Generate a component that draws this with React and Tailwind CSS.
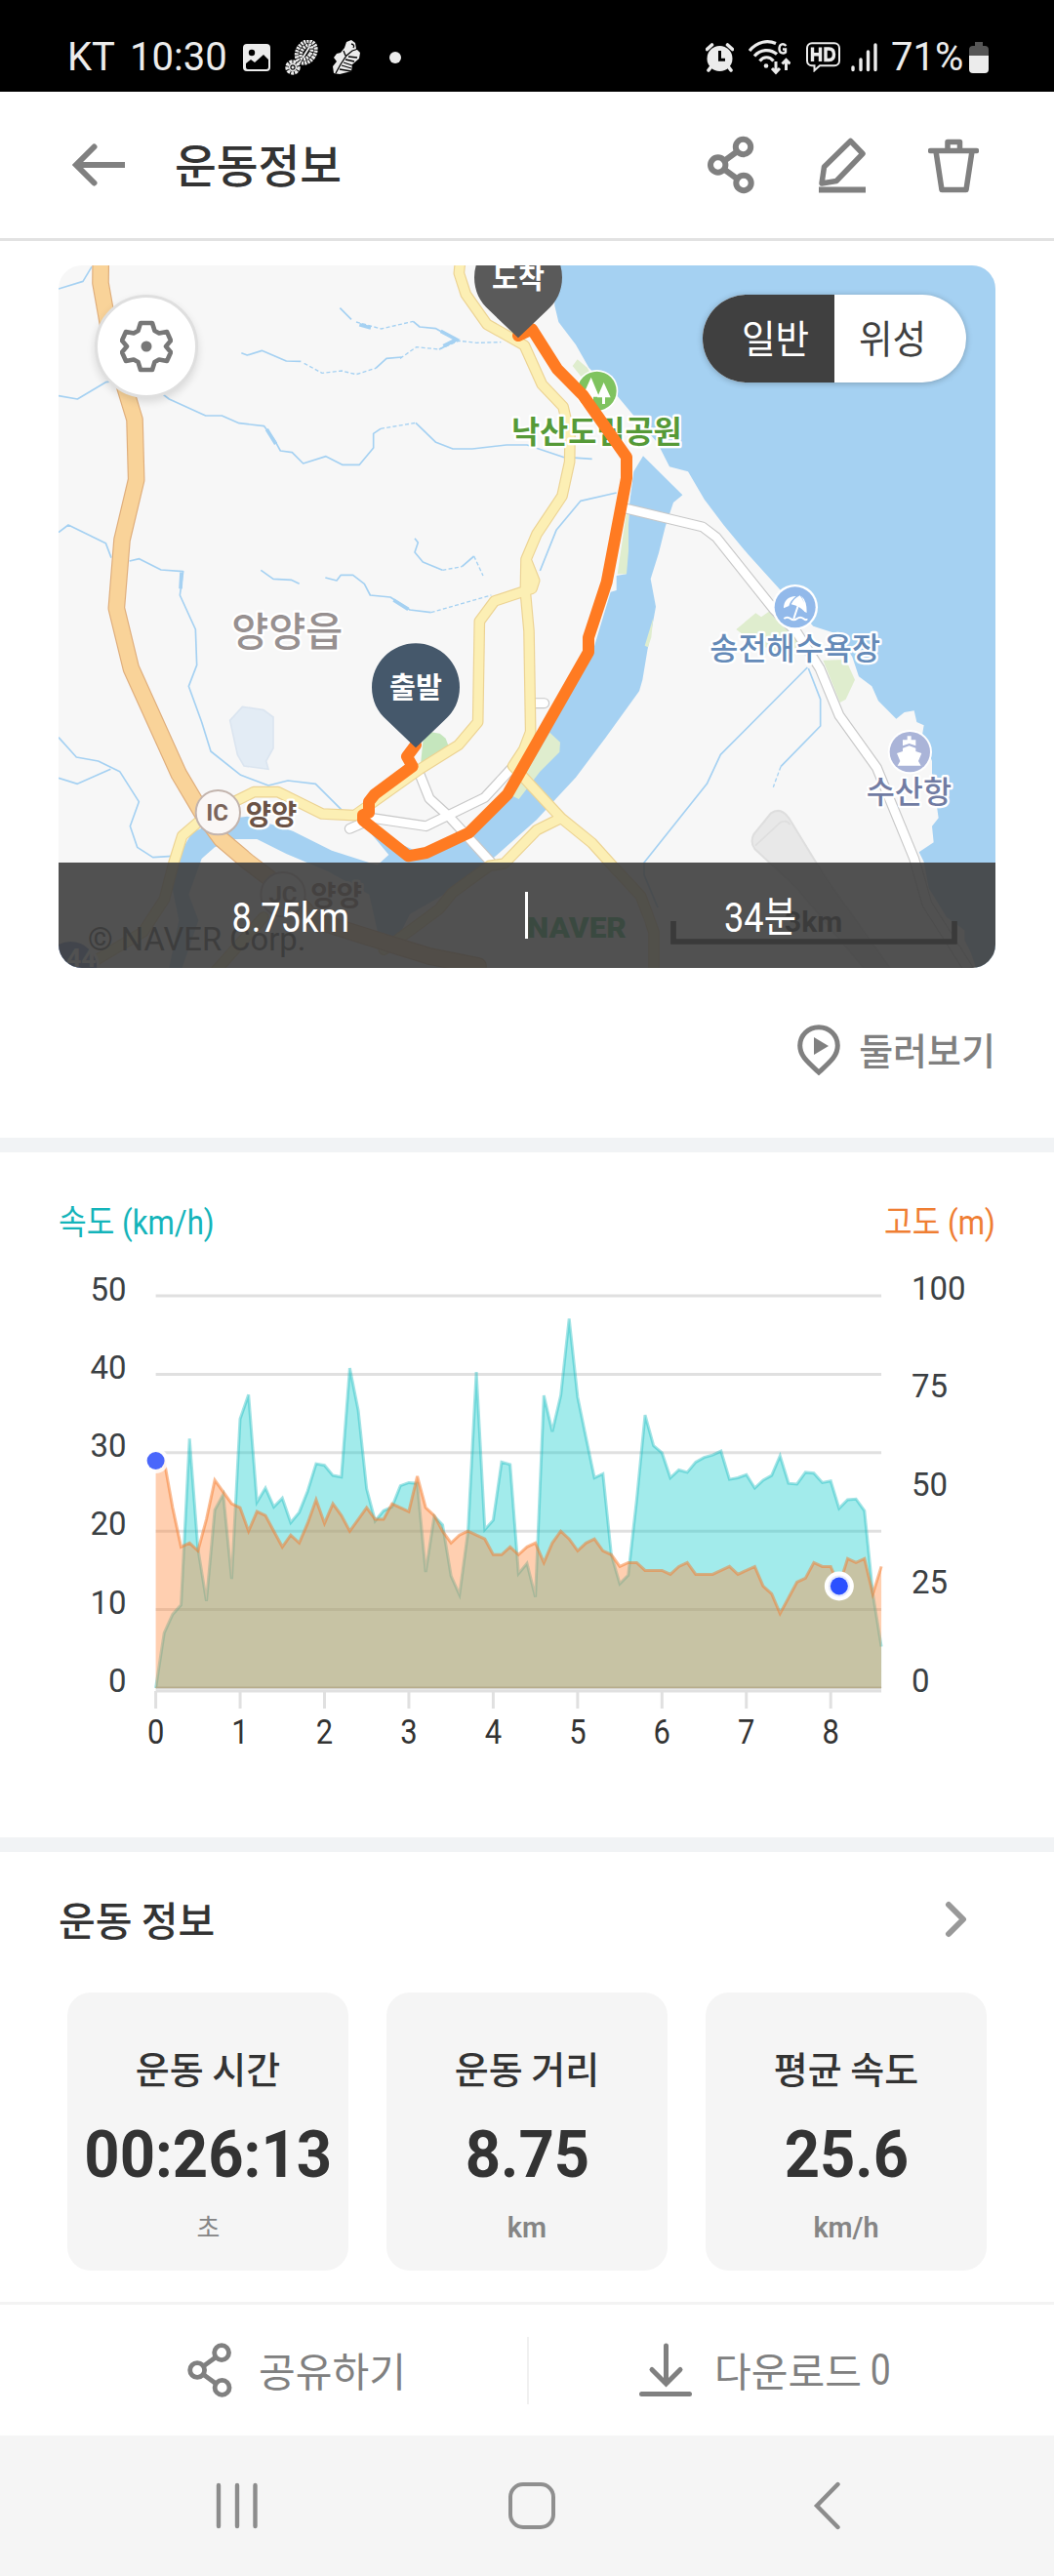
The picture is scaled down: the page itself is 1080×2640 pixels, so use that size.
import React from 'react';

const SPEED = [
  0, 7, 9.4, 10.6, 31.8, 17.8, 11.1, 22.7, 24.7, 13.9,
  34.3, 37.4, 23.7, 25.5, 23.1, 24.2, 21.1, 22.4, 25.1, 28.6,
  28.4, 27.1, 26.9, 40.8, 35.4, 25.4, 21.3, 22.6, 23.1, 25.8,
  26.2, 26.1, 14.8, 21.9, 20.8, 14.3, 11.9, 19.9, 40.3, 20.2,
  21.4, 28.8, 28.5, 14.6, 15.9, 11.6, 37.3, 32.7, 37.3, 47.1,
  37.1, 31.9, 26.8, 27.3, 17, 13.3, 14.4, 24, 34.8, 30.9,
  30, 26.8, 27.8, 27.5, 28.8, 29.4, 29.7, 30.2, 26.6, 26.8,
  27.2, 25.5, 26.5, 27.1, 29.6, 26.1, 26, 27.5, 27.4, 26.2,
  26.4, 22.9, 24, 24.1, 22.6, 12, 5.3,
];

const ELEVATION = [
  58, 58, 46, 36, 37, 35, 43, 53, 50, 47,
  46, 40, 45, 44, 40, 36, 39, 37, 42, 48,
  42, 47, 44, 40, 43, 46, 43, 43, 47, 46,
  45, 54, 46, 44, 40, 37, 39, 40, 39, 38,
  34, 34, 36, 34, 36, 37, 32, 37, 40, 38,
  35, 37, 38, 35, 34, 31, 32, 32, 30, 30,
  30, 29, 31, 32, 29, 29, 29, 30, 31, 29,
  30, 31, 26, 24, 19, 23, 27, 28, 32, 31,
  31, 26, 33, 32, 33, 24, 31,
];

const STATS = [
  { label: '운동 시간', value: '00:26:13', unit: '초' },
  { label: '운동 거리', value: '8.75', unit: 'km' },
  { label: '평균 속도', value: '25.6', unit: 'km/h' },
];

function StatusBar() {
  return (
    <div className="flex h-[94px] items-center bg-black pt-[23px] pr-[67px] pl-[69px] font-['Roboto',sans-serif] text-[40px] leading-none text-[#ececec]">
      <span className="w-[50px]">KT</span>
      <span className="ml-[14px] w-[102px]">10:30</span>
      <svg className="ml-[14px] h-7 w-7" viewBox="0 0 28 28">
        <rect width="28" height="28" rx="4" fill="#ececec" />
        <circle cx="9" cy="9" r="3.2" fill="#000" />
        <path d="M3 20l5-4 4 3 9-8 5 5v8a2 2 0 0 1-2 2H5a2 2 0 0 1-2-2z" fill="#000" />
      </svg>
      <svg className="ml-[15px] h-9 w-[34px]" viewBox="0 0 34 36" fill="none" stroke="#ececec">
        <g transform="rotate(32 22 12)">
          <ellipse cx="22" cy="12.500" rx="9" ry="12" strokeWidth="4" strokeDasharray="2.200 .9" />
          <ellipse cx="22" cy="12.500" rx="4.500" ry="8" strokeWidth="3.600" strokeDasharray="2.200 .9" />
          <path d="M22 6v13" strokeWidth="2" />
        </g>
        <circle cx="8" cy="28" r="6" strokeWidth="3.400" strokeDasharray="3 1" />
        <circle cx="8" cy="28" r="3.400" strokeWidth="1.500" />
        <circle cx="8" cy="28" r="1.500" fill="#ececec" stroke="none" />
      </svg>
      <svg className="ml-[15px] h-9 w-7" viewBox="0 0 28 36">
        <path d="M14 2l5-2 4 3 1 6 4 4-1 6-7 6-1 7-12 3-6-1-1-7 4-5-3-4 3-4 4-1 4-5z" fill="#ececec" />
        <path d="M3 34l5-9 6-9 6-5 6-2M16 17l9 1M13 20l9 2M11 23l9 3M9 26l10 3M7 30l12 2M19 4q4 1 2 4M11 11l2 5" stroke="#000" strokeWidth="1.300" fill="none" />
      </svg>
      <span className="ml-[30px] h-3 w-3 rounded-full bg-[#ececec]" />
      <svg className="ml-auto h-[30px] w-[29px]" viewBox="0 0 29 30">
        <path d="M1.500 6.500l5-4.500M27.500 6.500l-5-4.500M3 28l3-4M26 28l-3-4" stroke="#ececec" strokeWidth="3.600" strokeLinecap="round" />
        <circle cx="14.500" cy="16" r="13" fill="#ececec" />
        <path d="M14.500 8v9.300h5.500" stroke="#000" strokeWidth="3" fill="none" />
      </svg>
      <svg className="ml-[15px] h-9 w-[43px]" viewBox="0 0 43 36" fill="none" stroke="#ececec" strokeWidth="3.200">
        <path d="M1 11C9 1 20 0 28 3.500M6 16.500c6-7 16-8 23-2M11.500 21.500c4-5 10-5 14 0" />
        <circle cx="18" cy="26.500" r="2.300" fill="#ececec" stroke="none" />
        <path d="M38.500 6C35 2.500 31.500 4.500 31.500 9s4 5.500 6.500 3.500V9.500h-3" strokeWidth="2.400" />
        <path d="M28 22v11M24 29l4 4.200 4-4.200M38.500 31V20.500M34.500 24.500l4-4.200 4 4.200" strokeWidth="3" />
      </svg>
      <svg className="ml-[16px] h-[31px] w-[35px]" viewBox="0 0 35 31" fill="none" stroke="#ececec">
        <path d="M6 1.200h23a5 5 0 0 1 5 5v13a5 5 0 0 1-5 5H14l-5.500 5V24.200H6a5 5 0 0 1-5-5v-13a5 5 0 0 1 5-5z" strokeWidth="2" />
        <path d="M6.500 5.500v14.500M14.500 5.500v14.500M6.500 12.700h8M20 7v11.500h3.500c3.500 0 5-2 5-5.700S27 7 23.500 7z" strokeWidth="3.400" />
      </svg>
      <svg className="ml-[11px] h-[31px] w-[27px]" viewBox="0 0 27 31" stroke="#ececec" strokeWidth="3.400" strokeLinecap="round">
        <path d="M2 26v2.500M10 18v10.500M17.500 10v18.500M25 3v25.500" />
      </svg>
      <span className="ml-[14px] w-[74px]">71%</span>
      <svg className="ml-[6px] h-8 w-5" viewBox="0 0 20 32">
        <path d="M6 0h8v4h2a4 4 0 0 1 4 4v7H0V8a4 4 0 0 1 4-4h2z" fill="#555" />
        <path d="M0 14h20v14a4 4 0 0 1-4 4H4a4 4 0 0 1-4-4z" fill="#ececec" />
      </svg>
    </div>
  );
}

function ShareIcon({ className, strokeWidth = 6 }) {
  return (
    <svg className={className} viewBox="0 0 48 60" fill="none" stroke="#808080" strokeWidth={strokeWidth}>
      <path d="M30 16.500L17 26M17 34.500l13 9.500" />
      <circle cx="36.500" cy="11.500" r="7.700" />
      <circle cx="10.700" cy="30" r="7.700" />
      <circle cx="37" cy="48.500" r="7.700" />
    </svg>
  );
}

function Header() {
  return (
    <header className="flex h-[153px] items-center border-b-[3px] border-[#e2e2e2] bg-white pr-[77px] pl-[74px]">
      <svg className="h-[44px] w-[54px]" viewBox="0 0 54 44" fill="none" stroke="#808080" strokeWidth="6">
        <path d="M4 22h50" />
        <path d="M22.500 3.500L4 22l18.500 18.500" strokeLinecap="round" />
      </svg>
      <h1 className="mb-[4px] ml-[51px] text-[46.500px] leading-none font-medium text-[#333]">운동정보</h1>
      <ShareIcon className="ml-auto h-[60px] w-[48px]" />
      <svg className="ml-[66px] h-[60px] w-[48px]" viewBox="0 0 48 60" fill="none" stroke="#808080" strokeWidth="5.500">
        <path d="M32.500 5.500L45 18.500 18 46.500 3 49l2.500-17z" strokeLinejoin="round" />
        <path d="M0 55.500h48" strokeWidth="6" />
      </svg>
      <svg className="ml-[64px] h-[60px] w-[52px]" viewBox="0 0 52 60" fill="none" stroke="#808080" strokeWidth="5.500">
        <path d="M2.500 15.500h47" strokeLinecap="round" />
        <path d="M20 15V6.500h12.500V15M8 16l6 39.500h25L45 16" strokeLinejoin="round" />
      </svg>
    </header>
  );
}

// two strokes per road: casing, then surface
function Road({ d, width, fill, edge }) {
  return (
    <g fill="none" strokeLinejoin="round" strokeLinecap="round">
      <path d={d} stroke={edge} strokeWidth={width + 7} />
      <path d={d} stroke={fill} strokeWidth={width} />
    </g>
  );
}

function Pin({ x, y, color, label }) {
  return (
    <g transform={`translate(${x} ${y})`}>
      <path d="M0 0L-88 -84C-118 -110 -135 -145 -135 -186A135 135 0 0 1 135 -186C135 -145 118 -110 88 -84Z" fill={color} />
      <text y="-155" textAnchor="middle" fontSize="88" fontWeight="700" fill="#fff">{label}</text>
    </g>
  );
}

function MapLabel({ x, y, size, color, weight = 500, children }) {
  return (
    <text x={x} y={y} fontSize={size} textAnchor="middle" fontWeight={weight} fill={color} stroke="#fff" strokeWidth="14" strokeLinejoin="round" paintOrder="stroke">{children}</text>
  );
}

const YELLOW_ROADS = 'M1297 0L1291 60 1312 125 1377 217 1492 282 1546 402 1611 470 1632 560 1631 640 1608 745 1530 862 1497 940 1495 1040 1506 1160 1511 1470 1490 1525 1457 1575 1605 1735 1700 1812 1772 1892 1850 1975 1890 2085 1890 2220M1497 940L1523 1005 1515 1030 1400 1068 1354 1130 1349 1440 1290 1510 1170 1585 970 1727 870 1722 735 1655 660 1655 590 1690M490 1747L440 1790 415 1870 385 1985 320 2085 170 2175M1605 1735L1530 1772 1430 1875 1385 1882 1270 1965 1230 2015 1060 2140M690 2040L530 2220';

const WHITE_ROADS = 'M1790 780L2040 840 2082 872 2260 1095 2330 1165 2400 1275 2460 1420 2575 1580 2690 1860 2730 2000 2870 2220M1170 1600L1200 1675 1260 1730 1390 1872M1030 1736L1190 1760 1370 1672 1450 1585M955 1768L1000 1748M1520 1382L1553 1382';

const HIGHWAY = 'M190 0L189 90 213 225 262 405 294 510 299 695 255 880 238 1090 283 1275 430 1600 500 1718 560 1800 640 1868 760 1960 850 2050 1040 2110 1200 2160 1350 2190';

const STREAMS = 'M60 108L135 85 162 40M60 437L118 447 205 395 228 392M375 428L400 447 512 498 562 498 615 521 692 530 725 575 742 606 778 611 812 645 882 623 932 649 985 649 1028 597 1028 553 1050 538M1158 520L1220 580 1272 600 1332 600 1437 588 1500 588 1610 625 1700 631M60 857L90 834 205 890 222 935M278 945L308 938 375 972 443 977 433 1050 481 1155 485 1265 460 1330 500 1440 528 1530 620 1603 705 1635 765 1620 850 1630 935 1715M925 167L960 202M1150 208L1170 225 1220 230 1285 266 1230 294M622 305L640 312 685 298 760 330 805 331M1035 352L1068 322 1115 318M682 973L720 1000 775 1003 800 1015M880 996L915 1005 928 988 965 988 1000 1015 1018 1050 1080 1056 1140 1095 1205 1103M1155 875L1165 888 1155 918 1180 948 1240 973M1300 962L1337 930M1775 735L1665 760 1590 850 1540 975M60 1487L115 1548 182 1560 248 1592 307 1685 280 1760 302 1825 350 1856 410 1852M60 1612L118 1630 220 1585M2362 1272L2095 1540 2053 1630 1860 1872 1860 1910 1902 2010M2365 1275L2402 1370 2402 1452 2280 1577';

const DOTTED_STREAMS = 'M975 210L1052 231 1150 208M815 337L870 367 930 360 975 371 1035 352M1110 322L1160 287 1230 294 1290 268 1345 274 1420 272M1050 538L1158 520M1240 973L1300 962M1337 930L1365 990M1205 1103L1390 1050M2280 1577L2257 1640';

const ROUTE = 'M1473 252L1515 232 1593 355 1672 435 1806 625 1806 690 1745 1010 1689 1180 1689 1225 1440 1662 1322 1780 1190 1842 1135 1852 996 1742 996 1726 1014 1718 1014 1685 1032 1662 1148 1576 1131 1546 1158 1510';

function RouteMap() {
  return (
    <svg className="h-[720px] w-[960px]" viewBox="60 36 2880 2160" fontFamily="'Noto Sans CJK KR', sans-serif">
      <rect x="60" y="36" width="2880" height="2160" fill="#f7f7f7" />
      {/* sea */}
      <path fill="#a5d1f2" d="M1580 36L1585 160 1597 210 1650 280 1690 350 1780 440 1830 500 1900 580 1938 655 1995 670 2045 755 2105 835 2180 925 2275 1030 2380 1145 2440 1165 2475 1200 2500 1240 2520 1300 2560 1330 2580 1375 2635 1430 2660 1410 2690 1405 2698 1440 2720 1450 2715 1480 2745 1560 2745 1600 2800 1640 2760 1700 2765 1735 2745 1760 2750 1810 2705 1840 2720 1870 2735 1950 2790 2040 2845 2080 2845 2110 2865 2150 2880 2196 2940 2196 2940 36z" />
      {/* river */}
      <path fill="#a5d1f2" d="M1857 622L1978 742 1950 765 1925 840 1905 920 1880 1000 1896 1085 1886 1140 1870 1220 1855 1310 1845 1345 1740 1490 1650 1610 1590 1675 1530 1740 1400 1855 1280 1950 1140 2030 1110 2090 1050 2125 1015 1970 890 1900 760 1845 670 1800 600 1800 540 1825 500 1860 460 1970 490 2050 440 2196 400 2196 430 2050 410 1950 430 1850 470 1780 560 1740 640 1730 780 1775 900 1835 1040 1880 1075 1848 1010 1770 1190 1850 1330 1790 1450 1670 1560 1480 1700 1230 1757 1040 1775 1035 1775 990 1805 985 1815 770 1828 670z" />
      <g fill="#dfedce">
        <path d="M1805 800h7v115l-6 70h-28zM1640 345l15-20 30 25 20 35-25 10zM2143 1155l60-50 17 12 40-28 90 90-30 60-120-40zM2410 1250l70-2 28 62-28 60-18 10zM1570 1472l32 30-2 30-60 60-65 85-20-10zM1888 1120l-6 60-10 30-10-5z" />
      </g>
      <path fill="#c5e6bd" d="M1180 1500l20-30 32 5 18 15 12 32-90 58z" />
      <path fill="#e3ecf5" stroke="#dbe5f0" strokeWidth="5" d="M625 1393l65 10 30 22v95l-22 40 7 25-75-10-20-35-23-105z" />
      <path fill="#e8e8e8" stroke="#dedede" strokeWidth="6" d="M2250 1720q30 -20 55 15l110 180 200 281h-80L2330 1950l-130-120q-15 -20 -3 -45z" />
      <path fill="none" stroke="#dedede" strokeWidth="5" d="M2202 1820l75-70q20-12 32 6" />
      <path d={STREAMS} fill="none" stroke="#a5d1f2" strokeWidth="5" strokeLinejoin="round" />
      <path d={DOTTED_STREAMS} fill="none" stroke="#a5d1f2" strokeWidth="4" strokeDasharray="12 7" />
      <path fill="none" stroke="#a5d1f2" strokeWidth="11" d="M985 218l35 10M1235 238l48 26-40 20M700 540l28 45M438 980l-3 50M1090 1065l45 28" />
      <Road d={WHITE_ROADS} width={26} fill="#fff" edge="#c8c8c8" />
      <Road d={YELLOW_ROADS} width={28} fill="#fcefb4" edge="#ecd393" />
      <Road d={HIGHWAY} width={46} fill="#f9d399" edge="#dfae7c" />

      <circle cx="1715" cy="422" r="65" fill="#fff" />
      <circle cx="1715" cy="422" r="60" fill="#7fc35f" />
      <path fill="#fff" d="M1697 380l-27 60h20v20h14v-20h18zM1736 396l-20 46h15v20h9v-20h17z" />
      <circle cx="2324" cy="1087" r="70" fill="#fff" />
      <circle cx="2324" cy="1087" r="63" fill="#92b9ea" />
      <path fill="#fff" d="M2289 1090q0-35 38-37-18 14-22 30zM2312 1078q8-18 27-27 17 20 15 50-14-16-42-23zM2343 1052q18 15 17 52l-8-4q4-26-9-48z" />
      <path fill="none" stroke="#fff" strokeWidth="6" d="M2334 1080l-14 42M2290 1122q10-8 20 0t20 0 20 0 10 0" />
      <circle cx="2677" cy="1532" r="68" fill="#fff" />
      <circle cx="2677" cy="1532" r="62" fill="#aab4d8" />
      <path fill="#fff" d="M2669 1495v-12h12v12h14v18l-20-7-20 7v-18zM2655 1520l20-7 20 7v10l18 6-10 24 8 14h-72l8-14-10-24 18-6z" />

      <g fontFamily="Roboto, sans-serif">
        <circle cx="550" cy="1718" r="68" fill="#faf7f6" stroke="#c3b4ad" strokeWidth="6" />
        <text x="548" y="1744" fontSize="72" fontWeight="700" textAnchor="middle" fill="#7a645a">IC</text>
        <circle cx="750" cy="1970" r="68" fill="#faf7f6" stroke="#c3b4ad" strokeWidth="6" />
        <text x="750" y="1996" fontSize="72" fontWeight="700" textAnchor="middle" fill="#7a645a">JC</text>
      </g>
      <MapLabel x={714} y={1754} size={86} weight={700} color="#6b5346">양양</MapLabel>
      <MapLabel x={914} y={2005} size={86} weight={700} color="#6b5346">양양</MapLabel>
      <MapLabel x={763} y={1206} size={124} color="#979090">양양읍</MapLabel>
      <MapLabel x={1714} y={581} size={95} weight={700} color="#569a38">낙산도립공원</MapLabel>
      <MapLabel x={2324} y={1248} size={95} color="#648ab8">송전해수욕장</MapLabel>
      <MapLabel x={2674} y={1690} size={95} color="#717ca3">수산항</MapLabel>

      <g fontFamily="Roboto, sans-serif">
        <circle cx="97" cy="2196" r="85" fill="#5b7fc0" stroke="#fff" strokeWidth="8" />
        <text x="130" y="2192" fontSize="80" fontWeight="700" fill="#fff" textAnchor="middle">44</text>
        <text x="150" y="2142" fontSize="98" textLength="670" lengthAdjust="spacingAndGlyphs" fill="#222">© NAVER Corp.</text>
        <rect x="1440" y="2000" width="425" height="145" rx="72" fill="#fff" opacity=".5" />
        <text x="1500" y="2104" fontSize="88" fontWeight="900" textLength="306" lengthAdjust="spacingAndGlyphs" fill="#0aa04a">NAVER</text>
        <text x="2292" y="2084" fontSize="90" fontWeight="700" fill="#111">3km</text>
        <path d="M1950 2052v63h864v-63" fill="none" stroke="#000" strokeWidth="17" />
      </g>

      <path d={ROUTE} fill="none" stroke="#ff7b22" strokeWidth="36" strokeLinejoin="round" strokeLinecap="round" />
      <Pin x={1158} y={1519} color="#45586b" label="출발" />
      <Pin x={1473} y={259} color="#5a5a5a" label="도착" />
    </svg>
  );
}

function MapCard() {
  return (
    <div className="relative h-[720px] overflow-hidden rounded-[24px]">
      <RouteMap />
      <button className="absolute top-[30px] left-[37px] flex h-[106px] w-[106px] items-center justify-center rounded-full border-[3px] border-[#dfdfdf] bg-white shadow-[0_4px_8px_rgba(0,0,0,0.12)]">
        <svg className="h-[54px] w-[54px]" viewBox="0 0 54 54">
          <path d="M21 3h12l2.500 8 4.500 2.500 8-1.500 4 9-5 6 0 0 5 6-4 9-8-1.500-4.500 2.500L33 51H21l-2.500-8-4.500-2.500-8 1.500-4-9 5-6-5-6 4-9 8 1.500 4.500-2.500z" fill="none" stroke="#777" strokeWidth="4.600" strokeLinejoin="round" />
          <circle cx="27" cy="27" r="5.500" fill="#777" />
        </svg>
      </button>
      <div className="absolute top-[30px] right-[30px] flex h-[90px] w-[270px] overflow-hidden rounded-full bg-white text-[40px] leading-none shadow-[0_1px_6px_rgba(0,0,0,0.25)]">
        <button className="flex w-[135px] items-center bg-[#404040] pb-[4px] pl-[40px] text-white"><span className="inline-block origin-left scale-x-[0.94]">일반</span></button>
        <button className="flex flex-1 items-center pb-[4px] pl-[25px] text-[#404040]"><span className="inline-block origin-left scale-x-[0.94]">위성</span></button>
      </div>
      <div className="absolute inset-x-0 bottom-0 flex h-[108px] items-center bg-[#404040]/91 text-center text-[43px] leading-none text-white">
        <div className="flex-1 pr-[2px]"><span className="inline-block scale-x-[0.84] font-['Roboto',sans-serif]">8.75km</span></div>
        <div className="h-[48px] w-[3px] bg-white" />
        <div className="flex-1 pr-[3px]"><span className="inline-block scale-x-[0.84] font-['Roboto','Noto_Sans_CJK_KR',sans-serif]">34분</span></div>
      </div>
    </div>
  );
}

const X0 = 159.6;
const STEP = 8.645;
const BASE = 1730;

function toPoints(data, max) {
  return data.map((v, i) => `${(X0 + i * STEP).toFixed(1)},${(BASE - (v / max) * 402).toFixed(1)}`).join(' ');
}

function PaceChart() {
  const right = X0 + (SPEED.length - 1) * STEP;
  const speed = toPoints(SPEED, 50);
  const elevation = toPoints(ELEVATION, 100);
  const floor = `${right},${BASE} ${X0},${BASE}`;

  return (
    <svg className="mt-[15px] h-[520px] w-[1080px]" viewBox="0 1290 1080 520" fontFamily="Roboto, sans-serif">
      <g stroke="#e0e0e0" strokeWidth="3">
        {[50, 40, 30, 20, 10, 0].map(v => <line key={v} x1={X0} x2={right} y1={BASE - v * 8.04} y2={BASE - v * 8.04} />)}
        <line x1={X0} x2={right} y1="1733" y2="1733" />
        {[0, 1, 2, 3, 4, 5, 6, 7, 8].map(v => <line key={v} x1={X0 + v * 86.45} x2={X0 + v * 86.45} y1="1733" y2="1751" />)}
      </g>
      <polygon points={`${speed} ${floor}`} fill="#16cdcd" fillOpacity=".4" />
      <polyline points={speed} fill="none" stroke="#16b9bd" strokeOpacity=".4" strokeWidth="3" />
      <polygon points={`${elevation} ${floor}`} fill="#ff8739" fillOpacity=".4" />
      <polyline points={elevation} fill="none" stroke="#f5792a" strokeOpacity=".5" strokeWidth="3" />
      <line x1={X0} x2={right} y1="1729.500" y2="1729.500" stroke="#b8ad8c" strokeWidth="1.500" />
      <circle cx={X0} cy="1497" r="13" fill="#fff" fillOpacity=".85" />
      <circle cx={X0} cy="1497" r="9" fill="#4a67fb" />
      <circle cx={X0 + 81 * STEP} cy="1625.500" r="15" fill="#fff" />
      <circle cx={X0 + 81 * STEP} cy="1625.500" r="11" fill="#e6eafc" />
      <circle cx={X0 + 81 * STEP} cy="1625.500" r="9" fill="#2b50ff" />
      <g fontSize="33" fill="#3b4043">
        {[50, 40, 30, 20, 10, 0].map((v, i) => <text key={v} x="129.500" y={1332.500 + i * 80.3} textAnchor="end">{v}</text>)}
        {[100, 75, 50, 25, 0].map((v, i) => <text key={v} x="934" y={1332 + i * 100.4}>{v}</text>)}
      </g>
      <g fontSize="36" fill="#333">
        {[0, 1, 2, 3, 4, 5, 6, 7, 8].map(v => (
          <text key={v} transform={`translate(${X0 + v * 86.45} 1786.500) scale(.86 1)`} textAnchor="middle">{v}</text>
        ))}
      </g>
    </svg>
  );
}

export default function App() {
  return (
    <div className="flex h-[2640px] w-[1080px] flex-col bg-white font-['Noto_Sans_CJK_KR',sans-serif]">
      <StatusBar />
      <Header />

      <section className="h-[919px] px-[60px] pt-[25px]">
        <MapCard />
        <div className="mt-[58px] flex h-[52px] items-center justify-end">
          <svg className="h-[52px] w-[44px]" viewBox="0 0 44 52">
            <path d="M22 2.700C11 2.700 2.700 11 2.700 21.500 2.700 32 10 38 22 49 34 38 41.300 32 41.300 21.500 41.300 11 33 2.700 22 2.700z" fill="none" stroke="#808080" strokeWidth="5" />
            <path d="M17 13l15 9-15 9z" fill="#808080" />
          </svg>
          <span className="ml-[19px] pb-[3px] text-[38px] leading-none font-medium text-[#808080]">둘러보기</span>
        </div>
      </section>
      <div className="h-[15px] bg-[#f1f3f5]" />

      <section className="h-[702px] pt-[50px]">
        <div className="flex h-[44px] items-center justify-between px-[60px] text-[35px] leading-none">
          <span className="inline-block origin-left scale-x-[0.89] font-['Roboto','Noto_Sans_CJK_KR',sans-serif] text-[#14b4ba]">속도 (km/h)</span>
          <span className="inline-block origin-right scale-x-[0.89] font-['Roboto','Noto_Sans_CJK_KR',sans-serif] text-[#ef7e33]">고도 (m)</span>
        </div>
        <PaceChart />
      </section>
      <div className="h-[15px] bg-[#f1f3f5]" />

      <section className="h-[461px]">
        <div className="flex h-[144px] items-center justify-between pr-[88px] pl-[60px]">
          <h2 className="mb-[8px] text-[41px] leading-none font-medium text-[#333]">운동 정보</h2>
          <svg className="mb-[6px] h-[38px] w-[24px]" viewBox="0 0 24 38" fill="none" stroke="#999" strokeWidth="6" strokeLinecap="round" strokeLinejoin="round">
            <path d="M4 4l15 15L4 34" />
          </svg>
        </div>
        <div className="flex justify-center gap-[39px]">
          {STATS.map(s => (
            <div key={s.label} className="flex h-[285px] w-[288px] flex-col items-center rounded-[24px] bg-[#f5f5f5] pt-[57px] whitespace-nowrap">
              <div className="text-[38px] leading-[40px] font-medium text-[#333]">{s.label}</div>
              <div className="mt-[37px] scale-x-[0.96] font-['Roboto',sans-serif] text-[66px] leading-[66px] font-bold text-[#333]">{s.value}</div>
              <div className="mt-[26px] scale-x-[0.96] font-['Roboto','Noto_Sans_CJK_KR',sans-serif] text-[30px] leading-[30px] font-semibold text-[#858585]">
                {s.unit === '초' ? <span className="text-[27px] font-normal">{s.unit}</span> : s.unit}
              </div>
            </div>
          ))}
        </div>
      </section>

      <div className="flex h-[137px] items-center border-t-[3px] border-[#f3f3f3] text-[41px] leading-none text-[#808080]">
        <button className="flex w-[540px] items-center pl-[190px]">
          <ShareIcon className="h-[58px] w-[50px]" strokeWidth={5} />
          <span className="ml-[25px] pb-[2px]">공유하기</span>
        </button>
        <div className="h-[69px] w-[2px] bg-[#f0f0f0]" />
        <button className="flex flex-1 items-center pl-[113px]">
          <svg className="h-[56px] w-[54px]" viewBox="0 0 54 56" fill="none" stroke="#808080" strokeWidth="5" strokeLinecap="round">
            <path d="M27.500 3v38M13 27.500L27.500 42 42 27.500M2.500 52.500h49" />
          </svg>
          <span className="ml-[23px] pb-[2px]">다운로드</span>
          <span className="ml-[7px] inline-block scale-x-[0.85] font-['Roboto',sans-serif] text-[44px]">0</span>
        </button>
      </div>

      <nav className="flex h-[144px] items-center bg-[#f5f5f5] pl-[220px]">
        <svg className="h-[50px] w-[46px]" viewBox="0 0 46 50" stroke="#8c8c8c" strokeWidth="4.400" strokeLinecap="round">
          <path d="M4 4v42M23 4v42M41.500 4v42" />
        </svg>
        <div className="ml-[255px] h-[48px] w-[48px] rounded-[15px] border-[4.500px] border-[#8f8f8f]" />
        <svg className="ml-[264px] h-[50px] w-[30px]" viewBox="0 0 30 50" fill="none" stroke="#8c8c8c" strokeWidth="4.400" strokeLinecap="round">
          <path d="M25.500 3L4 25l21.500 22" />
        </svg>
      </nav>
    </div>
  );
}
